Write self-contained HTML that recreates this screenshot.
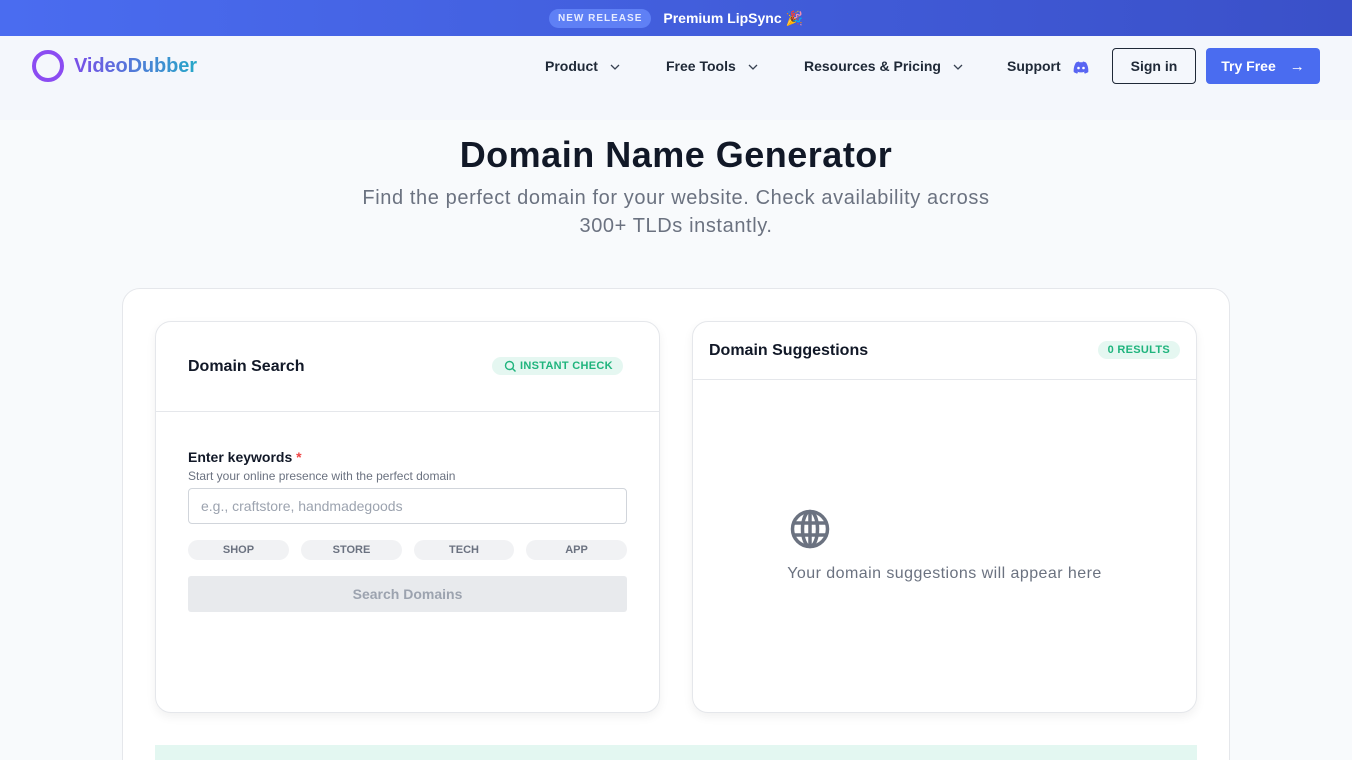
<!DOCTYPE html>
<html><head><meta charset="utf-8"><style>
*{box-sizing:border-box;margin:0;padding:0}
html,body{width:1352px;height:760px;overflow:hidden}
body{background:#f8fafc;font-family:"Liberation Sans",sans-serif;color:#111827;position:relative}
.top{height:36px;background:linear-gradient(90deg,#4a6cf0,#3a50c8);display:flex;align-items:center;justify-content:center;gap:12px}
.nr{background:#5f80f5;color:#e6ebff;font-size:10px;font-weight:700;letter-spacing:1px;padding:4px 9px;border-radius:10px}
.pl{color:#fff;font-weight:700;font-size:14px}
.hdr{height:84px;background:#f4f7fc;position:relative}
.logo{position:absolute;left:32px;top:14px;display:flex;align-items:center;gap:10px}
.ring{width:32px;height:32px;border-radius:50%;border:4px solid #8b4cf2}
.lt{font-size:20px;font-weight:700;background:linear-gradient(90deg,#7a4fe8,#25a8c8);-webkit-background-clip:text;color:transparent;letter-spacing:-.1px}
.nav{position:absolute;top:58px;font-size:14px;font-weight:700;color:#1f2937}
.nav svg{vertical-align:middle;margin-left:12px}
.btn{position:absolute;top:48px;height:36px;border-radius:4px;font-size:14px;font-weight:700;display:flex;align-items:center;justify-content:center}
h1{position:absolute;top:134px;width:100%;text-align:center;font-size:36px;font-weight:700;color:#111827;letter-spacing:.5px}
.sub{position:absolute;top:184px;left:0;width:100%;text-align:center;font-size:20px;line-height:28px;color:#6b7280;letter-spacing:.6px}
.outer{position:absolute;left:122px;top:288px;width:1108px;height:500px;background:#fff;border:1px solid #e5e7eb;border-radius:18px}
.card{position:absolute;top:321px;width:505px;height:392px;background:#fff;border:1px solid #e5e7eb;border-radius:16px;box-shadow:0 4px 10px rgba(0,0,0,.06)}
.pill{position:absolute;background:#e5f7f1;color:#1fb47d;font-size:11px;font-weight:700;border-radius:10px;padding:3px 10px;letter-spacing:.3px}
.tag{position:absolute;top:540px;width:101px;height:20px;border-radius:10px;background:#f1f2f4;color:#6b7280;font-size:11px;font-weight:700;text-align:center;line-height:20px}
</style></head><body>
<div class="top"><span class="nr">NEW RELEASE</span><span class="pl">Premium LipSync 🎉</span></div>
<div class="hdr">
<div class="logo"><div class="ring"></div><span class="lt">VideoDubber</span></div>
</div>
<div class="nav" style="left:545px;top:58px">Product<svg width="10" height="6"><path d="M1 1l4 4 4-4" fill="none" stroke="#374151" stroke-width="1.3"/></svg></div>
<div class="nav" style="left:666px">Free Tools<svg width="10" height="6"><path d="M1 1l4 4 4-4" fill="none" stroke="#374151" stroke-width="1.3"/></svg></div>
<div class="nav" style="left:804px">Resources &amp; Pricing<svg width="10" height="6"><path d="M1 1l4 4 4-4" fill="none" stroke="#374151" stroke-width="1.3"/></svg></div>
<div class="nav" style="left:1007px">Support <svg width="16" height="13" viewBox="0 0 16 13" style="margin-left:8px"><path d="M3 1.5C4.5.8 6 .5 6 .5l.4.8h3.2L10 .5s1.5.3 3 1C15 4.5 15.5 8 15.3 11c-1.2.9-2.5 1.4-3.5 1.6l-.8-1.3c.6-.2 1-.5 1.4-.8-2.5 1.2-6.3 1.2-8.8 0 .4.3.8.6 1.4.8l-.8 1.3C3.2 12.4 1.9 11.9.7 11 .5 8 1 4.5 3 1.5z" fill="#5865f2"/><circle cx="5.5" cy="7" r="1.3" fill="#fff"/><circle cx="10.5" cy="7" r="1.3" fill="#fff"/></svg></div>
<div class="btn" style="left:1112px;width:84px;border:1px solid #1f2937;color:#1f2937">Sign in</div>
<div class="btn" style="left:1206px;width:114px;background:#4a6cf0;color:#fff">Try Free <span style="margin-left:14px;font-size:15px">→</span></div>
<h1>Domain Name Generator</h1>
<div class="sub">Find the perfect domain for your website. Check availability across<br>300+ TLDs instantly.</div>
<div class="outer"></div>
<div class="card" style="left:155px">
 <div style="position:absolute;left:32px;top:36px;font-size:16px;font-weight:700">Domain Search</div>
 <div class="pill" style="left:336px;top:35px;padding-left:28px">INSTANT CHECK</div>
 <svg style="position:absolute;left:348px;top:38px" width="13" height="13"><circle cx="5.5" cy="5.5" r="4" fill="none" stroke="#1fb47d" stroke-width="1.4"/><path d="M8.5 8.5l3 3" stroke="#1fb47d" stroke-width="1.4"/></svg>
 <div style="position:absolute;left:0;right:0;top:89px;border-top:1px solid #e5e7eb"></div>
 <div style="position:absolute;left:32px;top:127px;font-size:14px;font-weight:700">Enter keywords <span style="color:#ef4444">*</span></div>
 <div style="position:absolute;left:32px;top:147px;font-size:12px;color:#6b7280">Start your online presence with the perfect domain</div>
 <div style="position:absolute;left:32px;top:166px;width:439px;height:36px;border:1px solid #d1d5db;border-radius:4px;font-size:14px;color:#9ca3af;padding:9px 12px">e.g., craftstore, handmadegoods</div>
 <div style="position:absolute;left:32px;top:254px;width:439px;height:36px;background:#e8eaed;border-radius:3px;color:#9ca3af;font-size:14px;font-weight:700;text-align:center;line-height:36px">Search Domains</div>
</div>
<div class="tag" style="left:188px">SHOP</div>
<div class="tag" style="left:301px">STORE</div>
<div class="tag" style="left:414px;width:100px">TECH</div>
<div class="tag" style="left:526px">APP</div>
<div class="card" style="left:692px">
 <div style="position:absolute;left:16px;top:20px;font-size:16px;font-weight:700">Domain Suggestions</div>
 <div class="pill" style="right:16px;top:19px">0 RESULTS</div>
 <div style="position:absolute;left:0;right:0;top:57px;border-top:1px solid #e5e7eb"></div>
 <svg style="position:absolute;left:96px;top:186px" width="42" height="42" viewBox="0 0 42 42"><g fill="none" stroke="#6b7280" stroke-width="3.5"><circle cx="21" cy="21" r="17.5"/><ellipse cx="21" cy="21" rx="7.5" ry="17.5"/><path d="M4 15h34M4 27h34M21 3.5v35"/></g></svg>
 <div style="position:absolute;left:0;right:0;top:243px;text-align:center;font-size:16px;color:#6b7280;letter-spacing:.45px">Your domain suggestions will appear here</div>
</div>
<div style="position:absolute;left:155px;top:745px;width:1042px;height:20px;background:#e3f7f1"></div>
</body></html>
